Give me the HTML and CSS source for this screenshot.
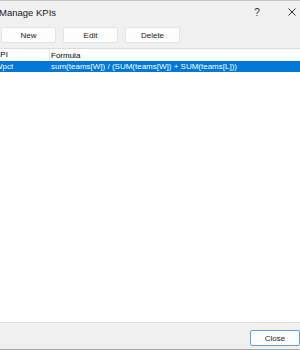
FILE: index.html
```html
<!DOCTYPE html>
<html lang="en">
  <head>
    <meta charset="utf-8">
    <title>Manage KPIs</title>
    <link rel="stylesheet" href="styles.css">
  </head>
  <body>
    <div class="dialog">
      <div class="dialog__titlebar">
        <span class="dialog__title">Manage KPIs</span>
        <span class="dialog__help">?</span>
        <span class="dialog__close">
          <svg width="10" height="10" viewBox="0 0 10 10">
            <path d="M1.5 1.5 L8.5 8.5 M8.5 1.5 L1.5 8.5" stroke="#333" stroke-width="1" fill="none"/>
          </svg>
        </span>
      </div>
      <div class="dialog__toolbar">
        <button class="btn">New</button>
        <button class="btn">Edit</button>
        <button class="btn">Delete</button>
      </div>
      <div class="list">
        <div class="list__head">
          <div class="list__kpi">KPI</div>
          <div class="list__formula">Formula</div>
        </div>
        <div class="list__row list__row--selected">
          <div class="list__kpi">Wpct</div>
          <div class="list__formula">sum(teams[W]) / (SUM(teams[W]) + SUM(teams[L]))</div>
        </div>
      </div>
      <div class="dialog__footer">
        <button class="btn btn--default">Close</button>
      </div>
    </div>
  </body>
</html>
```

FILE: styles.css
```css
*, *::after, *::before {
  margin: 0;
  padding: 0;
  box-sizing: border-box;
}
body {
  width: 300px;
  height: 350px;
  overflow: hidden;
  background-color: #f0f0f0;
  font-family: "Liberation Sans", Arial, sans-serif;
  font-size: 8px;
  color: #000;
}
.dialog {
  display: flex;
  flex-direction: column;
  height: 350px;
  border-top: 1px solid #c8c8c8;
  border-bottom: 1px solid #a8a8a8;
}
.dialog__titlebar {
  display: flex;
  align-items: center;
  height: 22px;
}
.dialog__title {
  flex: 1;
  margin-left: -1px;
  font-size: 9.5px;
  color: #1a1a1a;
}
.dialog__help {
  width: 14px;
  text-align: center;
  margin-right: 21px;
  font-size: 10px;
  color: #333;
}
.dialog__close {
  display: flex;
  width: 14px;
  justify-content: center;
  margin-right: 1px;
}
.dialog__toolbar {
  display: flex;
  gap: 7px;
  height: 25px;
  padding-top: 4px;
  padding-left: 1px;
}
.btn {
  width: 55px;
  height: 16px;
  background-color: #fdfdfd;
  border: 1px solid #e3e3e3;
  border-radius: 2px;
  font-family: inherit;
  font-size: 8px;
  color: #1a1a1a;
}
.list {
  flex: 1;
  background-color: #fff;
  border-top: 1px solid #dcdcdc;
}
.list__head, .list__row {
  display: flex;
  align-items: center;
  white-space: nowrap;
}
.list__head {
  height: 12px;
}
.list__row {
  height: 11px;
}
.list__kpi {
  width: 50px;
  text-indent: -5px;
}
.list__head .list__kpi {
  height: 12px;
  line-height: 12px;
  border-right: 1px solid #e5e5e5;
}
.list__formula {
  padding-left: 1px;
}
.list__row--selected {
  background-color: #0078d7;
  color: #fff;
}
.dialog__footer {
  display: flex;
  justify-content: flex-end;
  height: 27px;
  padding-top: 7px;
  border-top: 1px solid #dedede;
}
.btn--default {
  width: 50px;
  border-color: #5ea0dc;
}
```
